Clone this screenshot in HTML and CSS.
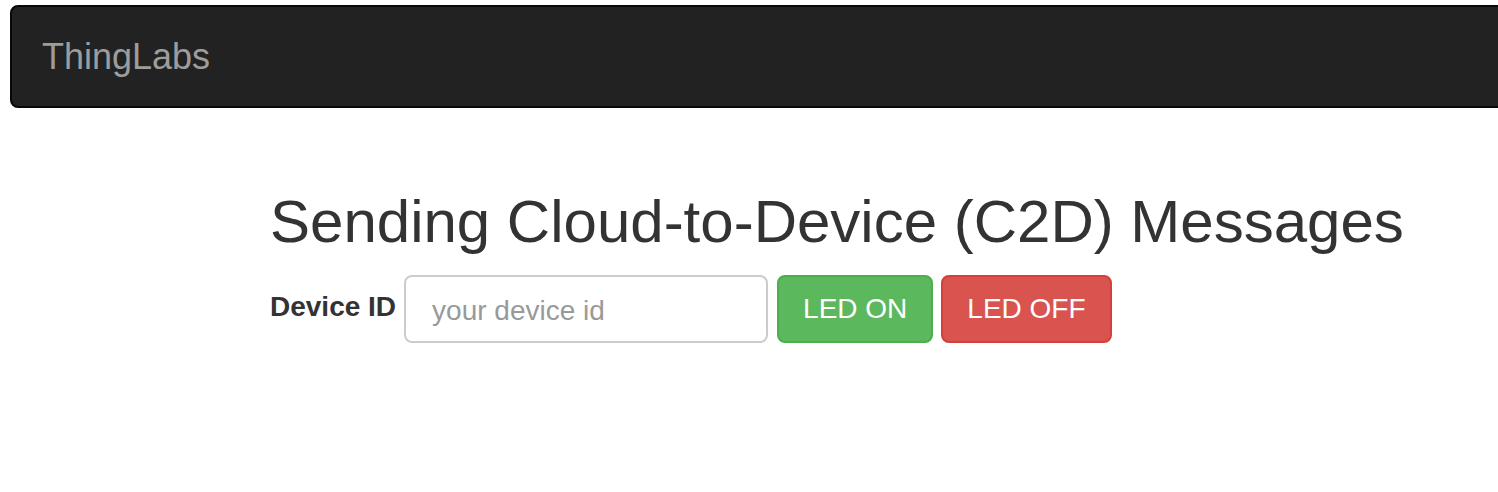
FILE: index.html
```html
<!DOCTYPE html>
<html lang="en">
<head>
<meta charset="utf-8">
<title>ThingLabs</title>
<link rel="stylesheet" href="styles.css">
</head>
<body>
<nav class="navbar">
  <a class="brand" href="#">ThingLabs</a>
</nav>
<main class="content">
  <h2 class="title">Sending Cloud-to-Device (C2D) Messages</h2>
  <form class="form-row">
    <label class="label" for="deviceId">Device ID</label>
    <input class="input" id="deviceId" type="text" placeholder="your device id">
    <button class="btn btn-on" type="button">LED ON</button>
    <button class="btn btn-off" type="button">LED OFF</button>
  </form>
</main>
</body>
</html>
```
FILE: styles.css
```css
html, body {
  margin: 0;
  padding: 0;
  overflow: hidden;
  background: #fff;
}
body {
  font-family: "Liberation Sans", Arial, sans-serif;
  color: #333;
  width: 1498px;
  height: 492px;
}
.navbar {
  box-sizing: border-box;
  margin: 5px 0 0 10px;
  width: 1520px;
  height: 103px;
  background: #222;
  border: 2px solid #080808;
  border-radius: 8px;
  display: flex;
  align-items: center;
}
.brand {
  padding: 0 30px;
  font-size: 36px;
  line-height: 40px;
  color: #9d9d9d;
  text-decoration: none;
}
.content {
  padding-left: 270px;
}
.title {
  margin: 81px 0 20px;
  font-size: 60px;
  line-height: 66px;
  font-weight: 500;
  color: #333;
}
.form-row {
  display: flex;
  align-items: center;
}
.label {
  font-size: 28px;
  font-weight: bold;
  line-height: 40px;
  margin: 0 8px 4px 0;
}
.input {
  box-sizing: border-box;
  width: 364px;
  height: 68px;
  padding: 3px 26px 0;
  border: 2px solid #ccc;
  border-radius: 8px;
  font-family: "Liberation Sans", Arial, sans-serif;
  font-size: 28px;
  color: #555;
  margin-right: 9px;
}
.input::placeholder {
  color: #999;
}
.btn {
  box-sizing: border-box;
  height: 68px;
  padding: 0 24px;
  border: 2px solid;
  border-radius: 8px;
  font-family: "Liberation Sans", Arial, sans-serif;
  font-size: 28px;
  color: #fff;
  margin-right: 8px;
}
.btn-on {
  background: #5cb85c;
  border-color: #4cae4c;
}
.btn-off {
  background: #d9534f;
  border-color: #d43f3a;
}
```
